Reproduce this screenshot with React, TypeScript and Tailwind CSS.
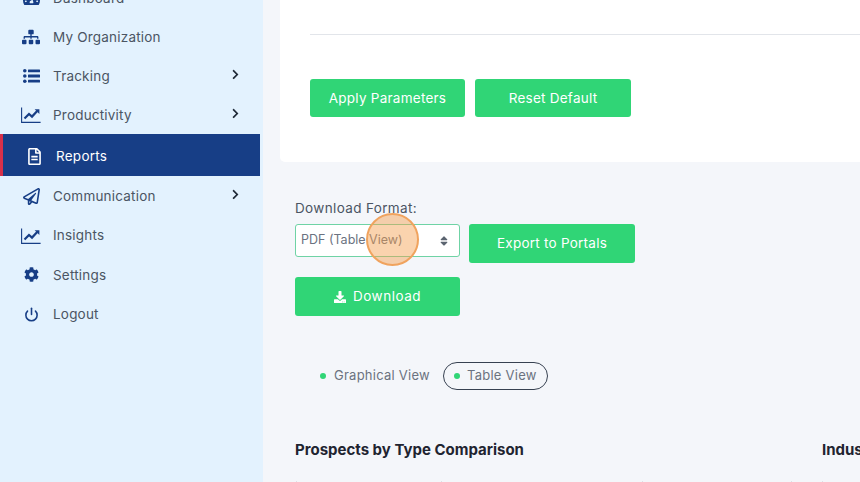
import { FaChevronRight, FaCog, FaDownload, FaRegFileAlt, FaRegPaperPlane, FaSitemap, FaSort, FaTachometerAlt } from "react-icons/fa";
import { FiPower } from "react-icons/fi";
import type { ReactNode } from "react";

function ChartIcon() {
  return (
    <svg width="20" height="16" viewBox="0 0 20 16" fill="none" className="block">
      <path d="M0.6 0.5V15.4H19.6" stroke="currentColor" strokeWidth="1.1" />
      <path d="M3.5 11.5L8 7L11 9.6L16.2 4" stroke="currentColor" strokeWidth="2.2" />
      <path d="M13.6 2.2H18.4V7Z" fill="currentColor" />
    </svg>
  );
}

function TrackingIcon() {
  return (
    <svg width="17" height="14" viewBox="0 0 17 14" fill="currentColor" className="block">
      <circle cx="1.8" cy="1.8" r="1.8" />
      <circle cx="1.8" cy="7" r="1.8" />
      <circle cx="1.8" cy="12.2" r="1.8" />
      <rect x="5" y="0.4" width="12" height="2.8" rx="0.5" />
      <rect x="5" y="5.6" width="12" height="2.8" rx="0.5" />
      <rect x="5" y="10.8" width="12" height="2.8" rx="0.5" />
    </svg>
  );
}

function NavItem({ icon, label, arrow, tall }: { icon: ReactNode; label: string; arrow?: boolean; tall?: boolean }) {
  return (
    <div className={`flex items-center pt-px pl-[21px] pr-[22px] text-[#4b5563] ${tall ? "h-[39.4px]" : "h-[39px]"}`}>
      <span className="w-[20px] flex justify-center text-[#173e86]">{icon}</span>
      <span className="ml-[12px] text-[13.5px] tracking-[0.2px]">{label}</span>
      {arrow && <FaChevronRight className="ml-auto mb-[3px] text-[11px] text-[#1f2937]" />}
    </div>
  );
}

function GreenButton({ children, className }: { children: ReactNode; className: string }) {
  return (
    <button className={`flex items-center justify-center rounded-[3px] bg-[#30d576] text-white text-[13.5px] tracking-[0.25px] ${className}`}>
      {children}
    </button>
  );
}

function Sidebar() {
  return (
    <aside className="w-[263px] shrink-0 h-[504px] bg-[#e3f2fe] mt-[-22px]">
      <NavItem icon={<FaTachometerAlt size={17} />} label="Dashboard" />
      <NavItem icon={<FaSitemap size={18} />} label="My Organization" />
      <NavItem icon={<TrackingIcon />} label="Tracking" arrow />
      <NavItem icon={<ChartIcon />} label="Productivity" arrow />
      <div className="flex items-center w-[260px] h-[42px] pt-[2px] bg-[#173e86] border-l-[3px] border-[#d7304a] pl-[23px] text-white">
        <FaRegFileAlt size={17} />
        <span className="ml-[13px] text-[13.5px] tracking-[0.25px]">Reports</span>
      </div>
      <NavItem tall icon={<FaRegPaperPlane size={17} />} label="Communication" arrow />
      <NavItem tall icon={<ChartIcon />} label="Insights" />
      <NavItem tall icon={<FaCog size={15} />} label="Settings" />
      <NavItem tall icon={<FiPower size={15} strokeWidth={2.5} />} label="Logout" />
    </aside>
  );
}

export default function App() {
  return (
    <div className="relative flex h-[482px] w-[860px] overflow-hidden bg-[#f4f6fa] font-['Inter','Noto_Sans',sans-serif]">
      <Sidebar />
      <main className="flex-1 min-w-0 pl-[17px]">
        <section className="h-[162px] bg-white rounded-bl-[5px] pl-[30px] pt-[34px]">
          <div className="border-t border-[#e2e5ea]" />
          <div className="flex gap-[10px] mt-[44px]">
            <GreenButton className="w-[155px] h-[38px]">Apply Parameters</GreenButton>
            <GreenButton className="w-[156px] h-[38px]">Reset Default</GreenButton>
          </div>
        </section>

        <section className="pl-[15px] pt-[37px]">
          <div className="text-[13.5px] leading-[18px] tracking-[0.35px] text-[#4b5563]">Download Format:</div>
          <div className="flex gap-[9px] mt-[7px]">
            <div className="flex items-center justify-between w-[165px] h-[33px] rounded-[3px] bg-white border-[1.5px] border-[#6fd3a5] pl-[5px] pr-[9px] text-[12.5px] text-[#6b7280]">
              PDF (Table View)
              <FaSort className="text-[12px] text-[#5b6470]" />
            </div>
            <GreenButton className="w-[166px] h-[39px]">Export to Portals</GreenButton>
          </div>
          <GreenButton className="w-[165px] h-[39px] gap-[7px] mt-[14px]">
            <FaDownload size={12} />
            <span className="tracking-[0.5px]">Download</span>
          </GreenButton>

          <div className="flex items-center mt-[46px] ml-[25px] text-[13px] tracking-[0.25px] text-[#6b7280]">
            <span className="size-[6px] rounded-full bg-[#30d576]" />
            <span className="ml-[8px]">Graphical View</span>
            <div className="flex items-center h-[28px] ml-[13px] px-[10px] rounded-full border border-[#374151]">
              <span className="size-[6px] rounded-full bg-[#30d576]" />
              <span className="ml-[7px]">Table View</span>
            </div>
          </div>

          <div className="flex mt-[50px] text-[15px] leading-[20px] font-bold text-[#1f2430] whitespace-nowrap">
            <h2 className="w-[527px] shrink-0">Prospects by Type Comparison</h2>
            <h2>Industry</h2>
          </div>

          {/* tops of the two tables, only the first pixel row is on screen */}
          <div className="flex h-[3px] mt-[21px] ml-px">
            <div className="w-[145px] border-l border-[#dde0e6]" />
            <div className="w-[201px] border-l border-[#dde0e6]" />
            <div className="w-[149px] border-l border-[#dde0e6]" />
            <div className="w-[31px] border-l border-[#dde0e6]" />
            <div className="w-[30px] border-l border-[#dde0e6]" />
          </div>
        </section>
      </main>
      <div className="absolute left-[366px] top-[213px] size-[53px] rounded-full bg-[#f59e4c]/45 border-2 border-[#f0a35e]" />
    </div>
  );
}
